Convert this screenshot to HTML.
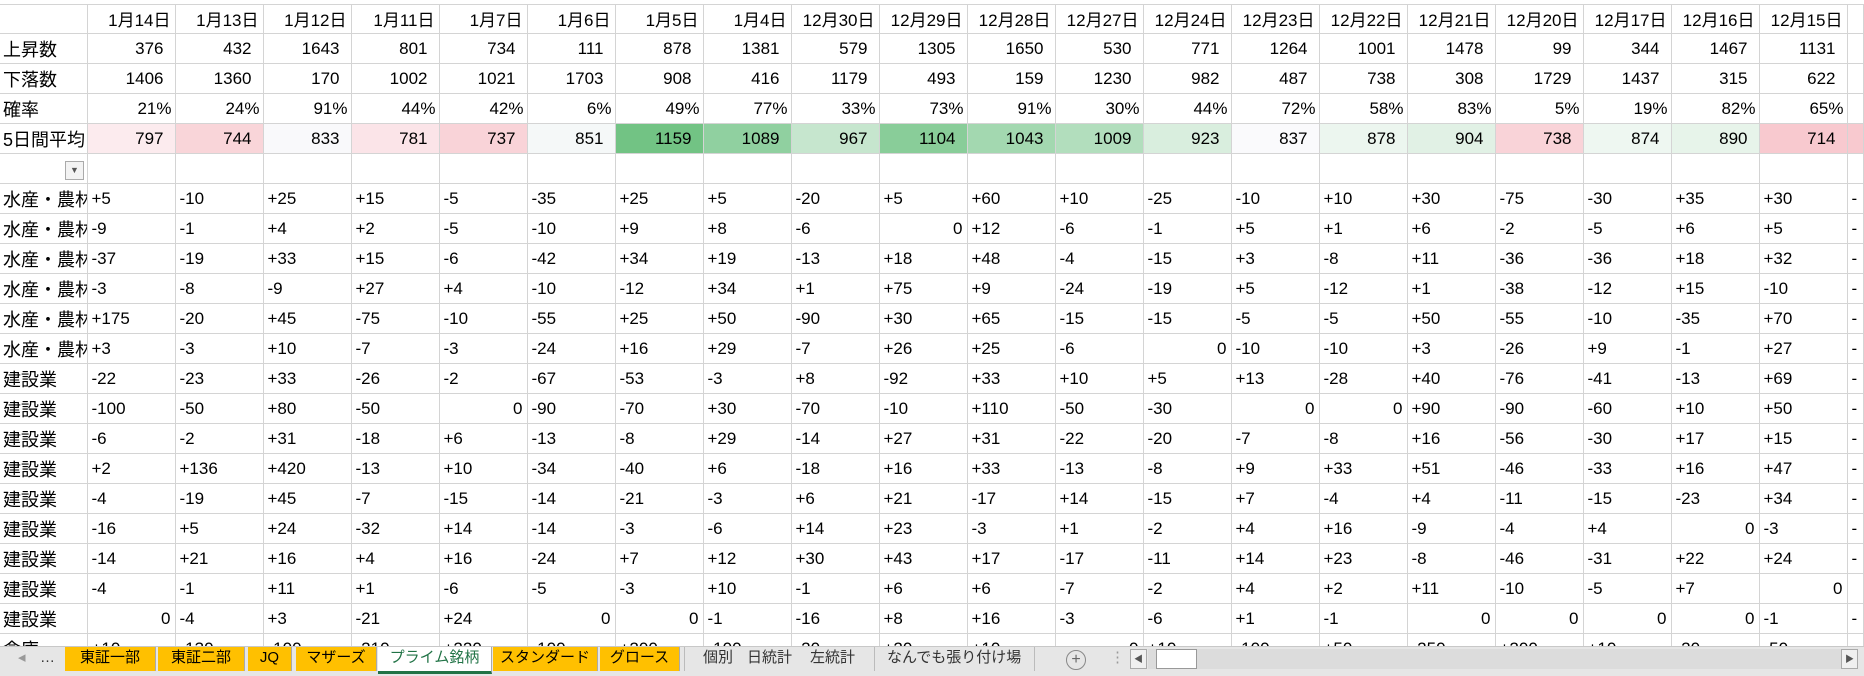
<!DOCTYPE html>
<html><head><meta charset="utf-8"><style>
body{margin:0;width:1864px;height:675px;overflow:hidden;background:#fff;font-family:"Liberation Sans","Noto Sans CJK JP",sans-serif;position:relative}
#top{position:absolute;left:0;top:0;width:1864px;height:4px;background:#fff;border-bottom:1px solid #d4d4d4}
table{position:absolute;left:0;top:4px;border-collapse:collapse;table-layout:fixed;width:1864px}
td{border:1px solid #d4d4d4;height:29px;padding:0;font-size:17px;white-space:nowrap;overflow:hidden;color:#000;text-align:left;padding-left:4px;border-top:none}
td:first-child{border-left:none;padding-left:3px;font-size:18px}
tr.h td{text-align:right;padding-right:4px;padding-left:0}
tr.n td{text-align:right;padding-right:11px;padding-left:0}
tr.p td{text-align:right;padding-right:3px;padding-left:0}
tr.n td:first-child,tr.p td:first-child,tr.h td:first-child{text-align:left;padding-left:3px}
td.z{text-align:right;padding-right:4px;padding-left:0}
#tabs{position:absolute;left:0;top:646px;width:1864px;height:29px;background:#e6e6e6;border-top:1px solid #c8c8c8;font-size:15px}
.t{position:absolute;top:0;height:24px;line-height:22px;background:#ffc000;text-align:center;color:#000;border-right:1px solid #aaa}
.x{position:absolute;top:0;line-height:22px;color:#333}
</style></head><body>
<div id="top"></div>
<table>
<colgroup><col style="width:87px"><col span="20" style="width:88px"><col></colgroup>
<tr class="h"><td></td><td>1月14日</td><td>1月13日</td><td>1月12日</td><td>1月11日</td><td>1月7日</td><td>1月6日</td><td>1月5日</td><td>1月4日</td><td>12月30日</td><td>12月29日</td><td>12月28日</td><td>12月27日</td><td>12月24日</td><td>12月23日</td><td>12月22日</td><td>12月21日</td><td>12月20日</td><td>12月17日</td><td>12月16日</td><td>12月15日</td><td></td></tr>
<tr class="n"><td>上昇数</td><td>376</td><td>432</td><td>1643</td><td>801</td><td>734</td><td>111</td><td>878</td><td>1381</td><td>579</td><td>1305</td><td>1650</td><td>530</td><td>771</td><td>1264</td><td>1001</td><td>1478</td><td>99</td><td>344</td><td>1467</td><td>1131</td><td></td></tr>
<tr class="n"><td>下落数</td><td>1406</td><td>1360</td><td>170</td><td>1002</td><td>1021</td><td>1703</td><td>908</td><td>416</td><td>1179</td><td>493</td><td>159</td><td>1230</td><td>982</td><td>487</td><td>738</td><td>308</td><td>1729</td><td>1437</td><td>315</td><td>622</td><td></td></tr>
<tr class="p"><td>確率</td><td>21%</td><td>24%</td><td>91%</td><td>44%</td><td>42%</td><td>6%</td><td>49%</td><td>77%</td><td>33%</td><td>73%</td><td>91%</td><td>30%</td><td>44%</td><td>72%</td><td>58%</td><td>83%</td><td>5%</td><td>19%</td><td>82%</td><td>65%</td><td></td></tr>
<tr class="n"><td>5日間平均</td><td style="background:#fcebee">797</td><td style="background:#f9d5d9">744</td><td style="background:#f9f9fb">833</td><td style="background:#fbe4e8">781</td><td style="background:#f9d3d8">737</td><td style="background:#f5f8f8">851</td><td style="background:#72c384">1159</td><td style="background:#90d0a0">1089</td><td style="background:#c6e6ce">967</td><td style="background:#89cd99">1104</td><td style="background:#a3d8b0">1043</td><td style="background:#b2debd">1009</td><td style="background:#d9eede">923</td><td style="background:#fafafc">837</td><td style="background:#ecf6ef">878</td><td style="background:#e1f1e5">904</td><td style="background:#f9d3d8">738</td><td style="background:#eef7f1">874</td><td style="background:#e7f4ea">890</td><td style="background:#f8c9cf">714</td><td style="background:#f8c9cf"></td></tr>
<tr><td style="position:relative"><div style="position:absolute;left:65px;top:7px;width:19px;height:19px;border:1px solid #aaa;background:#f3f3f3;box-sizing:border-box;font-size:9px;line-height:17px;text-align:center;color:#555">▼</div></td><td></td><td></td><td></td><td></td><td></td><td></td><td></td><td></td><td></td><td></td><td></td><td></td><td></td><td></td><td></td><td></td><td></td><td></td><td></td><td></td><td></td></tr>
<tr><td>水産・農林</td><td>+5</td><td>-10</td><td>+25</td><td>+15</td><td>-5</td><td>-35</td><td>+25</td><td>+5</td><td>-20</td><td>+5</td><td>+60</td><td>+10</td><td>-25</td><td>-10</td><td>+10</td><td>+30</td><td>-75</td><td>-30</td><td>+35</td><td>+30</td><td>-</td></tr>
<tr><td>水産・農林</td><td>-9</td><td>-1</td><td>+4</td><td>+2</td><td>-5</td><td>-10</td><td>+9</td><td>+8</td><td>-6</td><td class="z">0</td><td>+12</td><td>-6</td><td>-1</td><td>+5</td><td>+1</td><td>+6</td><td>-2</td><td>-5</td><td>+6</td><td>+5</td><td>-</td></tr>
<tr><td>水産・農林</td><td>-37</td><td>-19</td><td>+33</td><td>+15</td><td>-6</td><td>-42</td><td>+34</td><td>+19</td><td>-13</td><td>+18</td><td>+48</td><td>-4</td><td>-15</td><td>+3</td><td>-8</td><td>+11</td><td>-36</td><td>-36</td><td>+18</td><td>+32</td><td>-</td></tr>
<tr><td>水産・農林</td><td>-3</td><td>-8</td><td>-9</td><td>+27</td><td>+4</td><td>-10</td><td>-12</td><td>+34</td><td>+1</td><td>+75</td><td>+9</td><td>-24</td><td>-19</td><td>+5</td><td>-12</td><td>+1</td><td>-38</td><td>-12</td><td>+15</td><td>-10</td><td>-</td></tr>
<tr><td>水産・農林</td><td>+175</td><td>-20</td><td>+45</td><td>-75</td><td>-10</td><td>-55</td><td>+25</td><td>+50</td><td>-90</td><td>+30</td><td>+65</td><td>-15</td><td>-15</td><td>-5</td><td>-5</td><td>+50</td><td>-55</td><td>-10</td><td>-35</td><td>+70</td><td>-</td></tr>
<tr><td>水産・農林</td><td>+3</td><td>-3</td><td>+10</td><td>-7</td><td>-3</td><td>-24</td><td>+16</td><td>+29</td><td>-7</td><td>+26</td><td>+25</td><td>-6</td><td class="z">0</td><td>-10</td><td>-10</td><td>+3</td><td>-26</td><td>+9</td><td>-1</td><td>+27</td><td>-</td></tr>
<tr><td>建設業</td><td>-22</td><td>-23</td><td>+33</td><td>-26</td><td>-2</td><td>-67</td><td>-53</td><td>-3</td><td>+8</td><td>-92</td><td>+33</td><td>+10</td><td>+5</td><td>+13</td><td>-28</td><td>+40</td><td>-76</td><td>-41</td><td>-13</td><td>+69</td><td>-</td></tr>
<tr><td>建設業</td><td>-100</td><td>-50</td><td>+80</td><td>-50</td><td class="z">0</td><td>-90</td><td>-70</td><td>+30</td><td>-70</td><td>-10</td><td>+110</td><td>-50</td><td>-30</td><td class="z">0</td><td class="z">0</td><td>+90</td><td>-90</td><td>-60</td><td>+10</td><td>+50</td><td>-</td></tr>
<tr><td>建設業</td><td>-6</td><td>-2</td><td>+31</td><td>-18</td><td>+6</td><td>-13</td><td>-8</td><td>+29</td><td>-14</td><td>+27</td><td>+31</td><td>-22</td><td>-20</td><td>-7</td><td>-8</td><td>+16</td><td>-56</td><td>-30</td><td>+17</td><td>+15</td><td>-</td></tr>
<tr><td>建設業</td><td>+2</td><td>+136</td><td>+420</td><td>-13</td><td>+10</td><td>-34</td><td>-40</td><td>+6</td><td>-18</td><td>+16</td><td>+33</td><td>-13</td><td>-8</td><td>+9</td><td>+33</td><td>+51</td><td>-46</td><td>-33</td><td>+16</td><td>+47</td><td>-</td></tr>
<tr><td>建設業</td><td>-4</td><td>-19</td><td>+45</td><td>-7</td><td>-15</td><td>-14</td><td>-21</td><td>-3</td><td>+6</td><td>+21</td><td>-17</td><td>+14</td><td>-15</td><td>+7</td><td>-4</td><td>+4</td><td>-11</td><td>-15</td><td>-23</td><td>+34</td><td>-</td></tr>
<tr><td>建設業</td><td>-16</td><td>+5</td><td>+24</td><td>-32</td><td>+14</td><td>-14</td><td>-3</td><td>-6</td><td>+14</td><td>+23</td><td>-3</td><td>+1</td><td>-2</td><td>+4</td><td>+16</td><td>-9</td><td>-4</td><td>+4</td><td class="z">0</td><td>-3</td><td>-</td></tr>
<tr><td>建設業</td><td>-14</td><td>+21</td><td>+16</td><td>+4</td><td>+16</td><td>-24</td><td>+7</td><td>+12</td><td>+30</td><td>+43</td><td>+17</td><td>-17</td><td>-11</td><td>+14</td><td>+23</td><td>-8</td><td>-46</td><td>-31</td><td>+22</td><td>+24</td><td>-</td></tr>
<tr><td>建設業</td><td>-4</td><td>-1</td><td>+11</td><td>+1</td><td>-6</td><td>-5</td><td>-3</td><td>+10</td><td>-1</td><td>+6</td><td>+6</td><td>-7</td><td>-2</td><td>+4</td><td>+2</td><td>+11</td><td>-10</td><td>-5</td><td>+7</td><td class="z">0</td><td></td></tr>
<tr><td>建設業</td><td class="z">0</td><td>-4</td><td>+3</td><td>-21</td><td>+24</td><td class="z">0</td><td class="z">0</td><td>-1</td><td>-16</td><td>+8</td><td>+16</td><td>-3</td><td>-6</td><td>+1</td><td>-1</td><td class="z">0</td><td class="z">0</td><td class="z">0</td><td class="z">0</td><td>-1</td><td>-</td></tr>
<tr><td>倉庫</td><td>+10</td><td>-130</td><td>-100</td><td>-210</td><td>+220</td><td>-100</td><td>+200</td><td>-100</td><td>-20</td><td>+20</td><td>+10</td><td class="z">0</td><td>+10</td><td>-100</td><td>+50</td><td>-250</td><td>+200</td><td>+10</td><td>-20</td><td>-50</td><td></td></tr>
</table>
<div id="tabs">
<div class="x" style="left:18px;color:#999">◂</div>
<div class="x" style="left:40px">…</div>
<div class="t" style="left:65px;width:90px">東証一部</div>
<div class="t" style="left:158px;width:86px">東証二部</div>
<div class="t" style="left:248px;width:43px">JQ</div>
<div class="t" style="left:296px;width:80px">マザーズ</div>
<div class="t" style="left:378px;width:113px;background:#fff;color:#217346;border-bottom:3px solid #217346;height:24px">プライム銘柄</div>
<div class="t" style="left:493px;width:104px">スタンダード</div>
<div class="t" style="left:600px;width:79px">グロース</div>
<div class="x" style="left:684px;width:1px;height:24px;background:#bbb"></div>
<div class="x" style="left:703px">個別</div>
<div class="x" style="left:747px">日統計</div>
<div class="x" style="left:810px">左統計</div>
<div class="x" style="left:874px;width:1px;height:24px;background:#bbb"></div>
<div class="x" style="left:887px">なんでも張り付け場</div>
<div class="x" style="left:1034px;width:1px;height:24px;background:#bbb"></div>
<div style="position:absolute;left:1066px;top:3px;width:18px;height:18px;border:1px solid #888;border-radius:50%;text-align:center;line-height:18px;color:#666;font-size:16px">+</div>
<div class="x" style="left:1110px;color:#999">⋮</div>
<div style="position:absolute;left:1130px;top:2px;width:17px;height:20px;border:1px solid #aaa;background:#f0f0f0;box-sizing:border-box;font-size:9px;line-height:18px;text-align:center;color:#555">◀</div>
<div style="position:absolute;left:1148px;top:2px;width:694px;height:20px;background:#dcdcdc"></div>
<div style="position:absolute;left:1156px;top:2px;width:41px;height:20px;border:1px solid #999;background:#fff;box-sizing:border-box"></div>
<div style="position:absolute;left:1841px;top:2px;width:17px;height:20px;border:1px solid #aaa;background:#f0f0f0;box-sizing:border-box;font-size:9px;line-height:18px;text-align:center;color:#555">▶</div>
</div>
</body></html>
